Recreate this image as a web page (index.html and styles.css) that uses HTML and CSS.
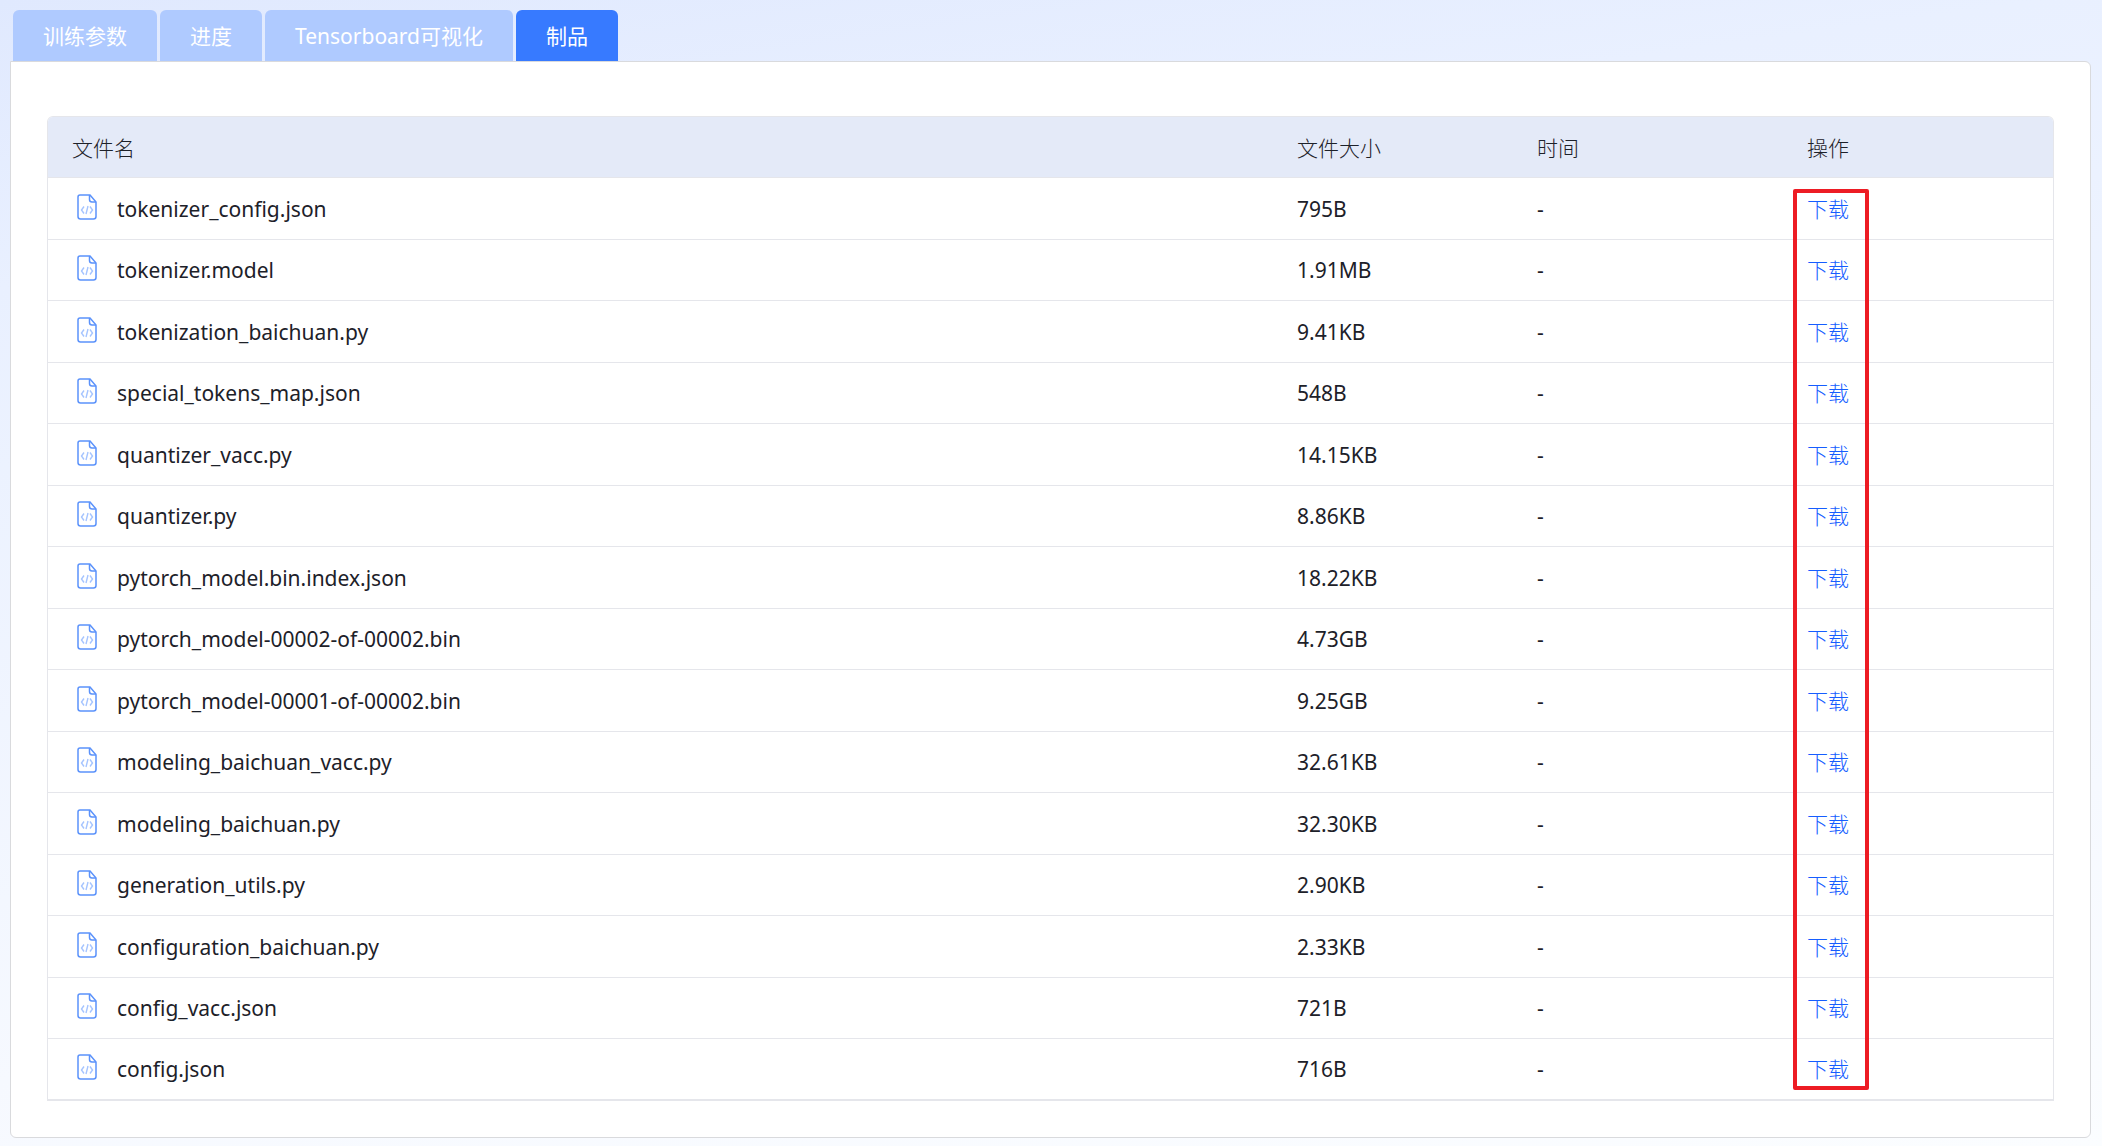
FILE: index.html
```html
<!DOCTYPE html>
<html lang="zh-CN">
<head>
<meta charset="utf-8">
<meta name="viewport" content="width=device-width, initial-scale=1">
<title>制品</title>
<link rel="stylesheet" href="styles.css">
</head>
<body>
<svg class="sprite" aria-hidden="true">
  <symbol id="file-code" viewBox="0 0 20 26">
    <path d="M3 1H13L19 8V22.500Q19 25 16.500 25H3.500Q1 25 1 22.500V3Q1 1 3 1Z" fill="none" stroke="#5b92fb" stroke-width="1.500"/>
    <path d="M12.500 1V5.500Q12.500 8 15 8H19" fill="none" stroke="#5b92fb" stroke-width="1.500"/>
    <path d="M7 12.500L4.500 16L7 19.500M13 12.500L15.500 16L13 19.500M11 12L9 20" fill="none" stroke="#a5c4ff" stroke-width="1.400"/>
  </symbol>
</svg>
<nav class="tabs" role="tablist">
  <button class="tab" type="button" role="tab">训练参数</button>
  <button class="tab" type="button" role="tab">进度</button>
  <button class="tab" type="button" role="tab">Tensorboard可视化</button>
  <button class="tab tab-active" type="button" role="tab" aria-selected="true">制品</button>
</nav>
<main class="panel">
  <div class="table-wrap">
    <table class="files">
      <thead>
        <tr><th>文件名</th><th class="col-size">文件大小</th><th class="col-time">时间</th><th class="col-action">操作</th></tr>
      </thead>
      <tbody>
        <tr><td><span class="file"><svg class="icon"><use href="#file-code"/></svg>tokenizer_config.json</span></td><td>795B</td><td>-</td><td><a class="download" href="#">下载</a></td></tr>
        <tr><td><span class="file"><svg class="icon"><use href="#file-code"/></svg>tokenizer.model</span></td><td>1.91MB</td><td>-</td><td><a class="download" href="#">下载</a></td></tr>
        <tr><td><span class="file"><svg class="icon"><use href="#file-code"/></svg>tokenization_baichuan.py</span></td><td>9.41KB</td><td>-</td><td><a class="download" href="#">下载</a></td></tr>
        <tr><td><span class="file"><svg class="icon"><use href="#file-code"/></svg>special_tokens_map.json</span></td><td>548B</td><td>-</td><td><a class="download" href="#">下载</a></td></tr>
        <tr><td><span class="file"><svg class="icon"><use href="#file-code"/></svg>quantizer_vacc.py</span></td><td>14.15KB</td><td>-</td><td><a class="download" href="#">下载</a></td></tr>
        <tr><td><span class="file"><svg class="icon"><use href="#file-code"/></svg>quantizer.py</span></td><td>8.86KB</td><td>-</td><td><a class="download" href="#">下载</a></td></tr>
        <tr><td><span class="file"><svg class="icon"><use href="#file-code"/></svg>pytorch_model.bin.index.json</span></td><td>18.22KB</td><td>-</td><td><a class="download" href="#">下载</a></td></tr>
        <tr><td><span class="file"><svg class="icon"><use href="#file-code"/></svg>pytorch_model-00002-of-00002.bin</span></td><td>4.73GB</td><td>-</td><td><a class="download" href="#">下载</a></td></tr>
        <tr><td><span class="file"><svg class="icon"><use href="#file-code"/></svg>pytorch_model-00001-of-00002.bin</span></td><td>9.25GB</td><td>-</td><td><a class="download" href="#">下载</a></td></tr>
        <tr><td><span class="file"><svg class="icon"><use href="#file-code"/></svg>modeling_baichuan_vacc.py</span></td><td>32.61KB</td><td>-</td><td><a class="download" href="#">下载</a></td></tr>
        <tr><td><span class="file"><svg class="icon"><use href="#file-code"/></svg>modeling_baichuan.py</span></td><td>32.30KB</td><td>-</td><td><a class="download" href="#">下载</a></td></tr>
        <tr><td><span class="file"><svg class="icon"><use href="#file-code"/></svg>generation_utils.py</span></td><td>2.90KB</td><td>-</td><td><a class="download" href="#">下载</a></td></tr>
        <tr><td><span class="file"><svg class="icon"><use href="#file-code"/></svg>configuration_baichuan.py</span></td><td>2.33KB</td><td>-</td><td><a class="download" href="#">下载</a></td></tr>
        <tr><td><span class="file"><svg class="icon"><use href="#file-code"/></svg>config_vacc.json</span></td><td>721B</td><td>-</td><td><a class="download" href="#">下载</a></td></tr>
        <tr><td><span class="file"><svg class="icon"><use href="#file-code"/></svg>config.json</span></td><td>716B</td><td>-</td><td><a class="download" href="#">下载</a></td></tr>
      </tbody>
    </table>
    <div class="highlight"></div>
  </div>
</main>
</body>
</html>
```

FILE: styles.css
```css
* { box-sizing: border-box; }

body {
  margin: 0;
  min-height: 100vh;
  padding: 10px 11px 8px 10px;
  background: linear-gradient(172deg, #e0e9fe 0%, #e9f0ff 20%, #f6f9ff 75%, #fbfdff 100%);
  color: #1d2129;
  font-family: "Noto Sans", "Noto Sans CJK SC", sans-serif;
  font-size: 21px;
  line-height: 30px;
}

.sprite { display: none; }

.tabs {
  display: flex;
  gap: 3px;
  padding-left: 3px;
}

.tab {
  height: 51px;
  padding: 0 30px;
  border: 0;
  border-radius: 6px 6px 0 0;
  background: #afcaff;
  color: #fff;
  font-family: inherit;
  font-size: 21px;
  line-height: 30px;
}

.tab-active { background: #377aff; }

.panel {
  padding: 54px 36px 36px;
  border: 1px solid #d9dadd;
  border-radius: 0 6px 6px 6px;
  background: #fff;
}

.table-wrap {
  position: relative;
  border: 1px solid #e5e6eb;
  border-bottom-width: 2px;
  border-radius: 6px 6px 0 0;
  overflow: hidden;
}

.files {
  width: 100%;
  table-layout: fixed;
  border-collapse: separate;
  border-spacing: 0;
}

.files th {
  height: 61px;
  padding: 1px 24px 0;
  border-bottom: 1px solid #e5e6eb;
  background: #e4eaf8;
  font-weight: 300;
  text-align: left;
}

.files td {
  height: 61px;
  padding: 0 24px;
  border-bottom: 1px solid #e5e6eb;
}

.files tbody tr:nth-child(odd) td { height: 62px; }
.files tbody tr:last-child td { height: 60px; border-bottom: 0; }

.col-size { width: 240px; }
.col-time, .col-action { width: 270px; }

.file {
  display: flex;
  align-items: center;
  gap: 20px;
  padding-left: 5px;
}

.icon {
  flex: none;
  width: 20px;
  height: 26px;
  margin-bottom: 4px;
}

.download {
  color: #165dff;
  font-weight: 300;
  text-decoration: none;
}

.highlight {
  position: absolute;
  top: 72px;
  right: 184px;
  bottom: 9px;
  width: 76px;
  border: 4px solid #ed1c24;
  border-radius: 2px;
  pointer-events: none;
}
```
